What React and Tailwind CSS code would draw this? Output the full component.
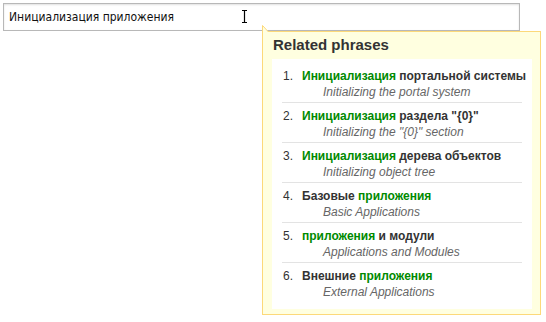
import React from "react";

const items = [
  { n: "1.", parts: [["g", "Инициализация"], ["d", " портальной системы"]], sub: "Initializing the portal system" },
  { n: "2.", parts: [["g", "Инициализация"], ["d", " раздела \"{0}\""]], sub: "Initializing the \"{0}\" section" },
  { n: "3.", parts: [["g", "Инициализация"], ["d", " дерева объектов"]], sub: "Initializing object tree" },
  { n: "4.", parts: [["d", "Базовые "], ["g", "приложения"]], sub: "Basic Applications" },
  { n: "5.", parts: [["g", "приложения"], ["d", " и модули"]], sub: "Applications and Modules" },
  { n: "6.", parts: [["d", "Внешние "], ["g", "приложения"]], sub: "External Applications" },
];

export default function App() {
  return (
    <div className="relative w-[546px] h-[322px] bg-white">
      <div className="pt-[3px] pl-[3px]">
        <div className="relative w-[517px] h-[28px] border border-[#b8b8b8] shadow-[inset_0_1px_2px_rgba(0,0,0,0.12)] flex items-center pl-[5px] text-[12px] text-[#111] font-['DejaVu_Sans_Condensed','DejaVu_Sans',sans-serif]">
          Инициализация приложения
          <svg className="absolute left-[235px] top-[5px]" width="12" height="15" viewBox="0 0 12 15">
            <path d="M3 1.5 H5.5 M5.5 1.5 H8 M5.5 1.5 V13.5 M3 13.5 H8" stroke="#000" strokeWidth="1.2" fill="none" />
          </svg>
        </div>
      </div>
      <div className="absolute left-[262px] top-[31px] w-[279px] border border-[#fcd97a] bg-[#ffffe0] pl-[9px] pr-[8px] pb-[5px] font-['Liberation_Sans',Arial,sans-serif]">
        <svg className="absolute left-[-1px] top-[-7px]" width="8" height="8" viewBox="0 0 8 8">
          <path d="M0.5 8 V0.5 L7 7.5" fill="#ffffe0" stroke="#fcd97a" strokeWidth="1" />
          <rect x="1" y="7" width="7" height="1" fill="#ffffe0" />
        </svg>
        <div className="h-[27px] leading-[26px] pl-[1px] text-[15px] font-bold text-[#333]">Related phrases</div>
        <ul className="bg-white pt-[4px] pb-[7px] px-[10px]">
          {items.map((it, i) => (
            <li key={i} className={(i > 0 ? "border-t border-[#e3e3e3] pt-[5px] " : "pt-[5px] ") + "pb-[2px] text-[12px]"}>
              <div className="flex leading-[16px] pl-[1px] whitespace-nowrap">
                <span className="w-[19px] shrink-0 text-[#333]">{it.n}</span>
                <span className="font-bold">
                  {it.parts.map(([t, s], j) => (
                    <span key={j} className={t === "g" ? "text-[#008a00]" : "text-[#333]"}>{s}</span>
                  ))}
                </span>
              </div>
              <div className="pl-[41px] leading-[16px] italic text-[#666]">{it.sub}</div>
            </li>
          ))}
        </ul>
      </div>
    </div>
  );
}
